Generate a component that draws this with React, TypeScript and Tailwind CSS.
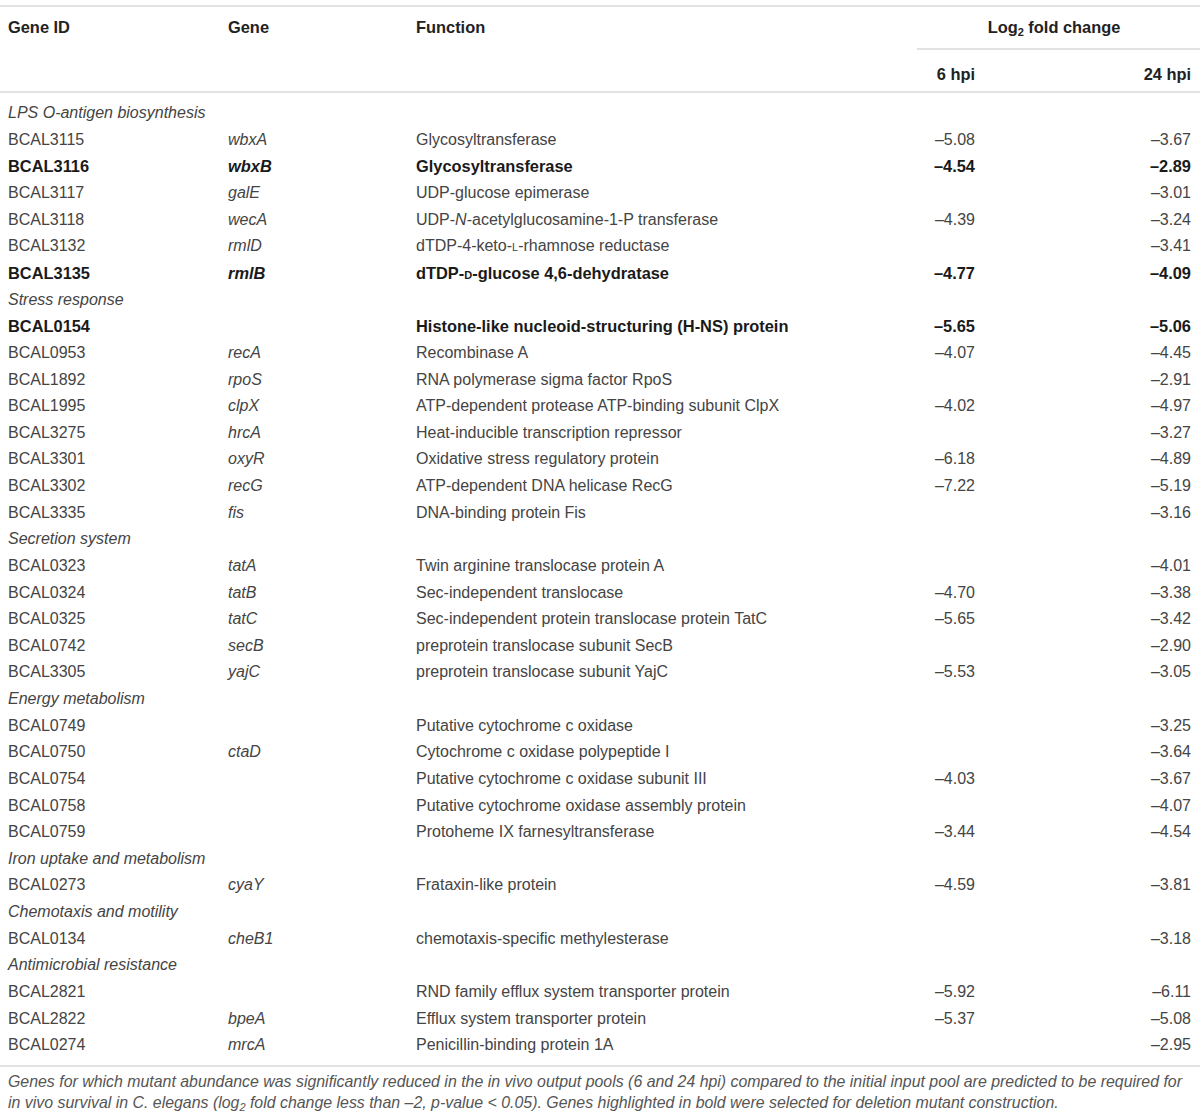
import { ReactNode } from 'react';

// 표 데이터: section 행 또는 gene 행
type Row =
  | { section: string }
  | { id: string; gene?: string; fn: ReactNode; h6?: string; h24: string; bold?: boolean };

const sc = (c: string) => <span className="[font-variant:small-caps]">{c}</span>;

const rows: Row[] = [
  { section: 'LPS O-antigen biosynthesis' },
  { id: 'BCAL3115', gene: 'wbxA', fn: 'Glycosyltransferase', h6: '–5.08', h24: '–3.67' },
  { id: 'BCAL3116', gene: 'wbxB', fn: 'Glycosyltransferase', h6: '–4.54', h24: '–2.89', bold: true },
  { id: 'BCAL3117', gene: 'galE', fn: 'UDP-glucose epimerase', h24: '–3.01' },
  {
    id: 'BCAL3118',
    gene: 'wecA',
    fn: (
      <>
        UDP-<i>N</i>-acetylglucosamine-1-P transferase
      </>
    ),
    h6: '–4.39',
    h24: '–3.24'
  },
  { id: 'BCAL3132', gene: 'rmlD', fn: <>dTDP-4-keto-{sc('l')}-rhamnose reductase</>, h24: '–3.41' },
  { id: 'BCAL3135', gene: 'rmlB', fn: <>dTDP-{sc('d')}-glucose 4,6-dehydratase</>, h6: '–4.77', h24: '–4.09', bold: true },
  { section: 'Stress response' },
  { id: 'BCAL0154', fn: 'Histone-like nucleoid-structuring (H-NS) protein', h6: '–5.65', h24: '–5.06', bold: true },
  { id: 'BCAL0953', gene: 'recA', fn: 'Recombinase A', h6: '–4.07', h24: '–4.45' },
  { id: 'BCAL1892', gene: 'rpoS', fn: 'RNA polymerase sigma factor RpoS', h24: '–2.91' },
  { id: 'BCAL1995', gene: 'clpX', fn: 'ATP-dependent protease ATP-binding subunit ClpX', h6: '–4.02', h24: '–4.97' },
  { id: 'BCAL3275', gene: 'hrcA', fn: 'Heat-inducible transcription repressor', h24: '–3.27' },
  { id: 'BCAL3301', gene: 'oxyR', fn: 'Oxidative stress regulatory protein', h6: '–6.18', h24: '–4.89' },
  { id: 'BCAL3302', gene: 'recG', fn: 'ATP-dependent DNA helicase RecG', h6: '–7.22', h24: '–5.19' },
  { id: 'BCAL3335', gene: 'fis', fn: 'DNA-binding protein Fis', h24: '–3.16' },
  { section: 'Secretion system' },
  { id: 'BCAL0323', gene: 'tatA', fn: 'Twin arginine translocase protein A', h24: '–4.01' },
  { id: 'BCAL0324', gene: 'tatB', fn: 'Sec-independent translocase', h6: '–4.70', h24: '–3.38' },
  { id: 'BCAL0325', gene: 'tatC', fn: 'Sec-independent protein translocase protein TatC', h6: '–5.65', h24: '–3.42' },
  { id: 'BCAL0742', gene: 'secB', fn: 'preprotein translocase subunit SecB', h24: '–2.90' },
  { id: 'BCAL3305', gene: 'yajC', fn: 'preprotein translocase subunit YajC', h6: '–5.53', h24: '–3.05' },
  { section: 'Energy metabolism' },
  { id: 'BCAL0749', fn: 'Putative cytochrome c oxidase', h24: '–3.25' },
  { id: 'BCAL0750', gene: 'ctaD', fn: 'Cytochrome c oxidase polypeptide I', h24: '–3.64' },
  { id: 'BCAL0754', fn: 'Putative cytochrome c oxidase subunit III', h6: '–4.03', h24: '–3.67' },
  { id: 'BCAL0758', fn: 'Putative cytochrome oxidase assembly protein', h24: '–4.07' },
  { id: 'BCAL0759', fn: 'Protoheme IX farnesyltransferase', h6: '–3.44', h24: '–4.54' },
  { section: 'Iron uptake and metabolism' },
  { id: 'BCAL0273', gene: 'cyaY', fn: 'Frataxin-like protein', h6: '–4.59', h24: '–3.81' },
  { section: 'Chemotaxis and motility' },
  { id: 'BCAL0134', gene: 'cheB1', fn: 'chemotaxis-specific methylesterase', h24: '–3.18' },
  { section: 'Antimicrobial resistance' },
  { id: 'BCAL2821', fn: 'RND family efflux system transporter protein', h6: '–5.92', h24: '–6.11' },
  { id: 'BCAL2822', gene: 'bpeA', fn: 'Efflux system transporter protein', h6: '–5.37', h24: '–5.08' },
  { id: 'BCAL0274', gene: 'mrcA', fn: 'Penicillin-binding protein 1A', h24: '–2.95' }
];

const cols = 'grid grid-cols-[220px_188px_1fr_58px_216px] pl-2 pr-[9px]';

export default function App() {
  return (
    <div className="w-[1200px] bg-white pt-[5px] text-[16px] text-[#444] [font-family:'Liberation_Sans',Arial,sans-serif]">
      {/* 헤더 */}
      <div className="border-t-2 border-b-2 border-[#e2e2e2]">
        <div className={`${cols} font-bold text-[#222] text-[16.4px] leading-5`}>
          <div className="pt-[10px]">Gene ID</div>
          <div className="pt-[10px]">Gene</div>
          <div className="pt-[10px]">Function</div>
          <div className="col-span-2 -mr-[9px] border-b-2 border-[#e2e2e2] pt-[10px] pb-[11px] text-center pr-[9px]">
            Log<sub className="text-[11px] leading-none">2</sub> fold change
          </div>
          <div />
          <div />
          <div />
          <div className="pt-[14px] pb-[7px] text-right">6 hpi</div>
          <div className="pt-[14px] pb-[7px] text-right">24 hpi</div>
        </div>
      </div>

      {/* 본문 */}
      <div className="border-b-2 border-[#e2e2e2] pt-[7px] pb-[6px]">
        {rows.map((r, i) =>
          'section' in r ? (
            <div key={i} className="h-[26.63px] flex items-center pl-2 italic">
              {r.section}
            </div>
          ) : (
            <div
              key={i}
              className={`${cols} h-[26.63px] items-center ${r.bold ? 'font-bold text-[16.4px] text-[#1a1a1a]' : ''}`}
            >
              <div>{r.id}</div>
              <div className="italic">{r.gene}</div>
              <div className="whitespace-nowrap">{r.fn}</div>
              <div className="text-right">{r.h6}</div>
              <div className="text-right">{r.h24}</div>
            </div>
          )
        )}
      </div>

      {/* 각주 */}
      <p className="pl-2 pt-[4px] italic text-[15.9px] leading-[21.5px] text-[#555] whitespace-nowrap">
        Genes for which mutant abundance was significantly reduced in the in vivo output pools (6 and 24 hpi)
        compared to the initial input pool are predicted to be required for
        <br />
        in vivo survival in C. elegans (log<sub className="text-[11px] leading-none">2</sub> fold change less than
        –2, p-value &lt; 0.05). Genes highlighted in bold were selected for deletion mutant construction.
      </p>
    </div>
  );
}
